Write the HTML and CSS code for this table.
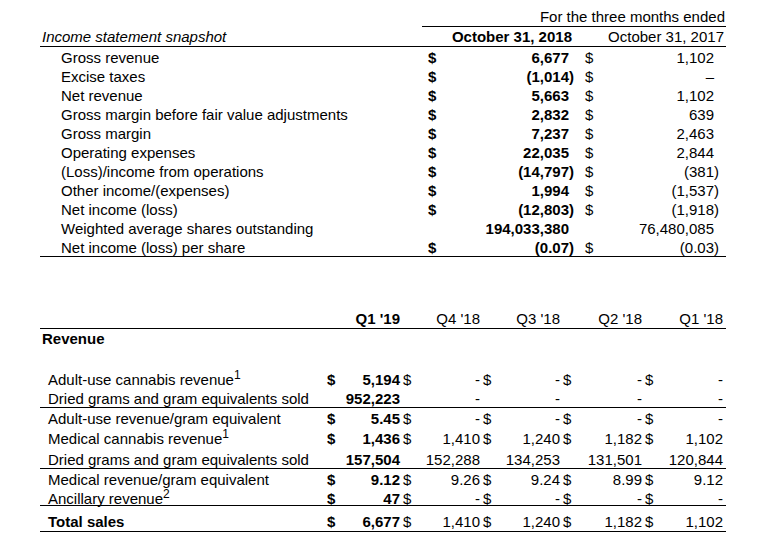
FILE: index.html
```html
<!DOCTYPE html>
<html>
<head>
<meta charset="utf-8">
<title>Income statement snapshot</title>
<link rel="stylesheet" href="styles.css">
</head>
<body>
<div class="page">
  <section class="snap">
    <div class="srow hdr1">
      <div></div>
      <div class="period">For the three months ended</div>
    </div>
    <div class="srow hdr2 rule">
      <div class="title">Income statement snapshot</div>
      <div class="d18">October 31, 2018</div>
      <div class="d17">October 31, 2017</div>
    </div>
    <div class="srow"><div class="lbl">Gross revenue</div><div class="cb">$</div><div class="v1">6,677</div><div class="cr">$</div><div class="v2">1,102</div></div>
    <div class="srow"><div class="lbl">Excise taxes</div><div class="cb">$</div><div class="v1">(1,014<span class="cp">)</span></div><div class="cr">$</div><div class="v2">–</div></div>
    <div class="srow"><div class="lbl">Net revenue</div><div class="cb">$</div><div class="v1">5,663</div><div class="cr">$</div><div class="v2">1,102</div></div>
    <div class="srow"><div class="lbl">Gross margin before fair value adjustments</div><div class="cb">$</div><div class="v1">2,832</div><div class="cr">$</div><div class="v2">639</div></div>
    <div class="srow"><div class="lbl">Gross margin</div><div class="cb">$</div><div class="v1">7,237</div><div class="cr">$</div><div class="v2">2,463</div></div>
    <div class="srow"><div class="lbl">Operating expenses</div><div class="cb">$</div><div class="v1">22,035</div><div class="cr">$</div><div class="v2">2,844</div></div>
    <div class="srow"><div class="lbl">(Loss)/income from operations</div><div class="cb">$</div><div class="v1">(14,797<span class="cp">)</span></div><div class="cr">$</div><div class="v2">(381<span class="cp">)</span></div></div>
    <div class="srow"><div class="lbl">Other income/(expenses)</div><div class="cb">$</div><div class="v1">1,994</div><div class="cr">$</div><div class="v2">(1,537<span class="cp">)</span></div></div>
    <div class="srow"><div class="lbl">Net income (loss)</div><div class="cb">$</div><div class="v1">(12,803<span class="cp">)</span></div><div class="cr">$</div><div class="v2">(1,918<span class="cp">)</span></div></div>
    <div class="srow"><div class="lbl">Weighted average shares outstanding</div><div class="cb"></div><div class="v1">194,033,380</div><div class="cr"></div><div class="v2">76,480,085</div></div>
    <div class="srow rule"><div class="lbl">Net income (loss) per share</div><div class="cb">$</div><div class="v1">(0.07<span class="cp">)</span></div><div class="cr">$</div><div class="v2">(0.03<span class="cp">)</span></div></div>
  </section>

  <section class="rev">
    <div class="rrow rule h20 head">
      <div></div><div></div><div class="v b">Q1 '19</div><div></div><div class="v">Q4 '18</div><div></div><div class="v">Q3 '18</div><div></div><div class="v">Q2 '18</div><div></div><div class="v last">Q1 '18</div>
    </div>
    <div class="rrow h19 head"><div class="sect">Revenue</div></div>
    <div class="rrow h20"></div>
    <div class="rrow h20">
      <div class="lbl">Adult-use cannabis revenue<sup>1</sup></div><div class="cb">$</div><div class="v b">5,194</div><div class="cr">$</div><div class="v">-</div><div class="cr">$</div><div class="v">-</div><div class="cr">$</div><div class="v">-</div><div class="cr">$</div><div class="v last">-</div>
    </div>
    <div class="rrow rule h20">
      <div class="lbl">Dried grams and gram equivalents sold</div><div></div><div class="v b">952,223</div><div></div><div class="v">-</div><div></div><div class="v">-</div><div></div><div class="v">-</div><div></div><div class="v last">-</div>
    </div>
    <div class="rrow h19">
      <div class="lbl">Adult-use revenue/gram equivalent</div><div class="cb">$</div><div class="v b">5.45</div><div class="cr">$</div><div class="v">-</div><div class="cr">$</div><div class="v">-</div><div class="cr">$</div><div class="v">-</div><div class="cr">$</div><div class="v last">-</div>
    </div>
    <div class="rrow h20">
      <div class="lbl">Medical cannabis revenue<sup>1</sup></div><div class="cb">$</div><div class="v b">1,436</div><div class="cr">$</div><div class="v">1,410</div><div class="cr">$</div><div class="v">1,240</div><div class="cr">$</div><div class="v">1,182</div><div class="cr">$</div><div class="v last">1,102</div>
    </div>
    <div class="rrow rule h22">
      <div class="lbl">Dried grams and gram equivalents sold</div><div></div><div class="v b">157,504</div><div></div><div class="v">152,288</div><div></div><div class="v">134,253</div><div></div><div class="v">131,501</div><div></div><div class="v last">120,844</div>
    </div>
    <div class="rrow h19">
      <div class="lbl">Medical revenue/gram equivalent</div><div class="cb">$</div><div class="v b">9.12</div><div class="cr">$</div><div class="v">9.26</div><div class="cr">$</div><div class="v">9.24</div><div class="cr">$</div><div class="v">8.99</div><div class="cr">$</div><div class="v last">9.12</div>
    </div>
    <div class="rrow rule h18 tight">
      <div class="lbl">Ancillary revenue<sup>2</sup></div><div class="cb">$</div><div class="v b">47</div><div class="cr">$</div><div class="v">-</div><div class="cr">$</div><div class="v">-</div><div class="cr">$</div><div class="v">-</div><div class="cr">$</div><div class="v last">-</div>
    </div>
    <div class="rrow rule h26 tot">
      <div class="lbl b">Total sales</div><div class="cb">$</div><div class="v b">6,677</div><div class="cr">$</div><div class="v">1,410</div><div class="cr">$</div><div class="v">1,240</div><div class="cr">$</div><div class="v">1,182</div><div class="cr">$</div><div class="v last">1,102</div>
    </div>
  </section>
</div>
</body>
</html>
```

FILE: styles.css
```css
* {
  box-sizing: border-box;
  margin: 0;
  padding: 0;
}

body {
  margin: 0;
  background: #ffffff;
  color: #000000;
  font-family: "Liberation Sans", Arial, sans-serif;
  font-size: 15px;
}

.page {
  padding: 7px 0 0 40px;
  width: 770px;
}

/* ---------- Income statement snapshot ---------- */
.snap {
  width: 686px;
}

.srow {
  display: grid;
  grid-template-columns: 382px 23px 130px 25px 126px;
  height: 19px;
  align-items: end;
  line-height: 17px;
  padding-bottom: 0;
  white-space: nowrap;
}

.rule {
  border-bottom: 1px solid #000;
}

.srow.rule {
  height: 20px;
}

.srow.hdr1 {
  height: 20px;
  padding-bottom: 0;
}

.srow.hdr2 {
  padding-bottom: 1px;
}

.period {
  grid-column: 2 / 6;
  align-self: stretch;
  display: flex;
  align-items: flex-end;
  justify-content: flex-end;
  padding: 0 1px 1px 0;
  border-bottom: 1px solid #000;
}

.title {
  font-style: italic;
  padding-left: 2px;
}

.d18 {
  grid-column: 2 / 4;
  text-align: right;
  font-weight: bold;
  padding-right: 3px;
}

.d17 {
  grid-column: 4 / 6;
  text-align: right;
  padding-right: 2px;
}

.srow .lbl {
  padding-left: 21px;
}

.srow .cb {
  font-weight: bold;
  padding-left: 6px;
}

.srow .v1 {
  font-weight: bold;
  text-align: right;
  padding-right: 6px;
}

.srow .cr {
  padding-left: 10px;
}

.srow .v2 {
  text-align: right;
  padding-right: 12px;
}

.cp {
  margin-right: -5px;
}

/* ---------- Revenue table ---------- */
.rev {
  width: 686px;
  margin-top: 52px;
}

.rrow {
  display: grid;
  grid-template-columns: 282px 18px 60px 12px 68px 12px 68px 12px 70px 12px 72px;
  align-items: end;
  line-height: 17px;
  padding-bottom: 0;
  white-space: nowrap;
}

.rrow.head {
  padding-bottom: 1px;
}

.h18 { height: 18px; }
.h19 { height: 19px; }
.h20 { height: 20px; }
.h22 { height: 22px; }
.h26 { height: 26px; }

.rrow.tight {
  line-height: 12px;
}

.rrow.tot {
  padding-bottom: 1px;
}

.sect {
  font-weight: bold;
  padding-left: 2px;
}

.rrow .lbl {
  padding-left: 8px;
}

.rrow .cb {
  font-weight: bold;
  padding-left: 5px;
}

.rrow .cr {
  padding-left: 3px;
}

.rrow .v {
  text-align: right;
}

.rrow .v.last {
  padding-right: 3px;
}

.b {
  font-weight: bold;
}

sup {
  font-size: 12px;
  line-height: 0;
  vertical-align: 6px;
}
```
